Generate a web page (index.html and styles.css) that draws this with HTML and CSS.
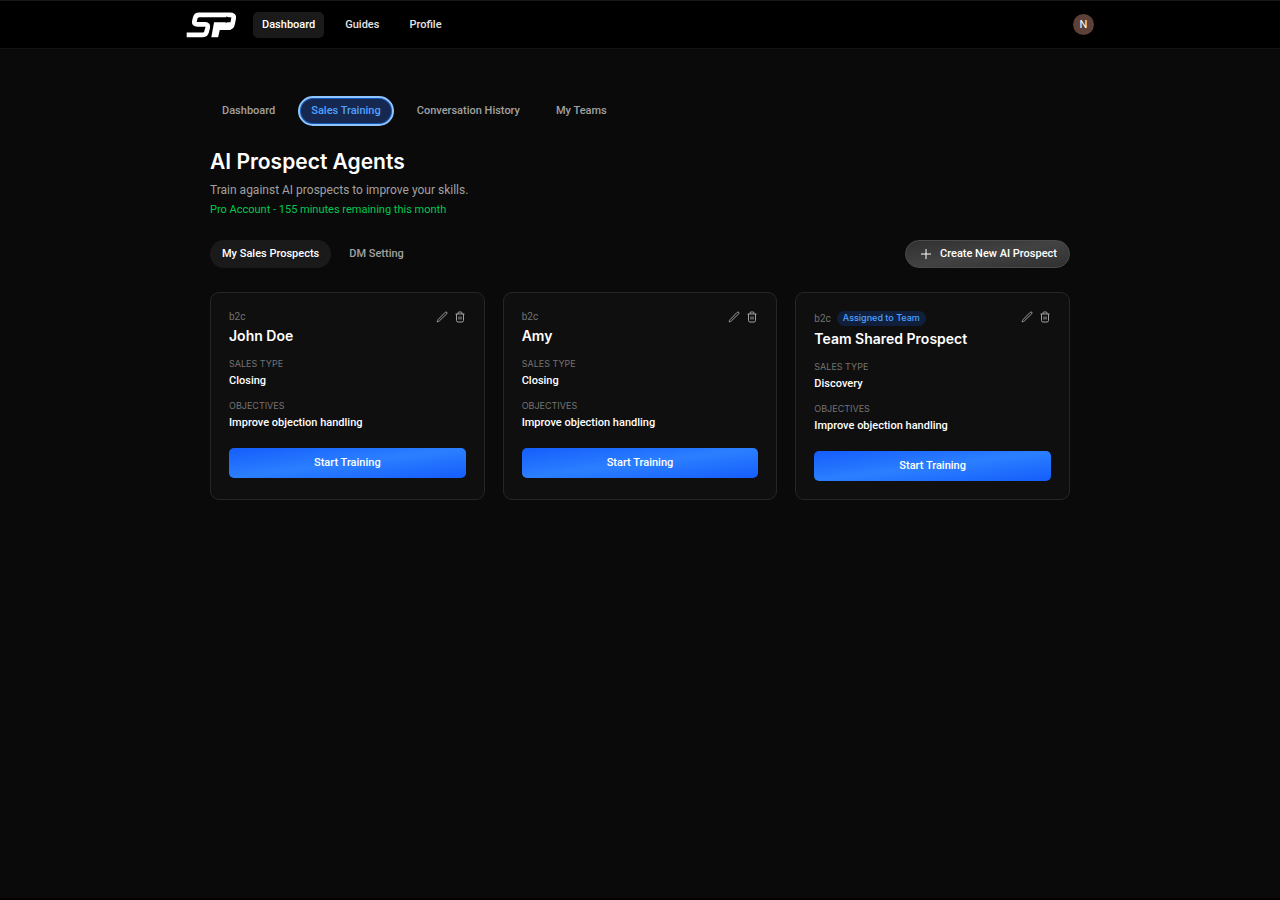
FILE: index.html
```html
<!DOCTYPE html>
<html lang="en">

<head>
  <meta charset="UTF-8">
  <meta name="viewport" content="width=device-width, initial-scale=1.0">
  <title>AI Prospect Agents</title>
  <link rel="stylesheet" href="styles.css">
</head>

<body>
  <!-- shared icons -->
  <svg class="sprite" aria-hidden="true">
    <symbol id="icon-edit" viewBox="0 0 24 24">
      <path d="M17.5 3.5l1-1a1.9 1.9 0 0 1 3 3L6.8 19.8a4.5 4.5 0 0 1-1.9 1.1L2.3 21.8l.8-2.7a4.5 4.5 0 0 1 1.1-1.9L17.5 3.5z" />
    </symbol>
    <symbol id="icon-trash" viewBox="0 0 24 24">
      <path d="M3 6h18M5 6v13a3 3 0 0 0 3 3h8a3 3 0 0 0 3-3V6M8 6V4a2 2 0 0 1 2-2h4a2 2 0 0 1 2 2v2M10 11v6M14 11v6" />
    </symbol>
  </svg>

  <header class="header">
    <div class="header-inner">
      <a class="logo" href="#" aria-label="SP">
        <svg viewBox="20 22 148 76">
          <path class="logo-line" d="M22 89H70Q79 89 81 80L84 68Q86 58 77 58H54Q43 58 45 49L47 40Q49 30 59 30H150Q163 30 161 40L158 56Q156 68 144 68" />
          <path class="logo-stem" d="M103 52H158L152 75H120L115 96H95Z" />
          <path class="logo-arrow" d="M140 34L153 44L137 55L139 48H56V41H139Z" />
        </svg>
      </a>
      <nav class="nav">
        <a class="nav-link active" href="#">Dashboard</a>
        <a class="nav-link" href="#">Guides</a>
        <a class="nav-link" href="#">Profile</a>
      </nav>
      <button class="avatar" type="button">N</button>
    </div>
  </header>

  <main class="main">
    <nav class="tabs">
      <a class="tab" href="#">Dashboard</a>
      <a class="tab current" href="#">Sales Training</a>
      <a class="tab" href="#">Conversation History</a>
      <a class="tab" href="#">My Teams</a>
    </nav>

    <h1 class="title">AI Prospect Agents</h1>
    <p class="subtitle">Train against AI prospects to improve your skills.</p>
    <p class="account">Pro Account - 155 minutes remaining this month</p>

    <div class="toolbar">
      <div class="filters">
        <button class="filter active" type="button">My Sales Prospects</button>
        <button class="filter" type="button">DM Setting</button>
      </div>
      <button class="create" type="button">
        <svg class="icon-plus" viewBox="0 0 12 12"><path d="M6 1v10M1 6h10" /></svg>
        Create New AI Prospect
      </button>
    </div>

    <div class="cards">
      <article class="card">
        <div class="card-head">
          <div>
            <div class="meta">b2c</div>
            <h2 class="name">John Doe</h2>
          </div>
          <div class="actions">
            <button type="button" aria-label="Edit"><svg><use href="#icon-edit" /></svg></button>
            <button type="button" aria-label="Delete"><svg><use href="#icon-trash" /></svg></button>
          </div>
        </div>
        <dl class="details">
          <dt>SALES TYPE</dt>
          <dd>Closing</dd>
          <dt>OBJECTIVES</dt>
          <dd>Improve objection handling</dd>
        </dl>
        <button class="start" type="button">Start Training</button>
      </article>

      <article class="card">
        <div class="card-head">
          <div>
            <div class="meta">b2c</div>
            <h2 class="name">Amy</h2>
          </div>
          <div class="actions">
            <button type="button" aria-label="Edit"><svg><use href="#icon-edit" /></svg></button>
            <button type="button" aria-label="Delete"><svg><use href="#icon-trash" /></svg></button>
          </div>
        </div>
        <dl class="details">
          <dt>SALES TYPE</dt>
          <dd>Closing</dd>
          <dt>OBJECTIVES</dt>
          <dd>Improve objection handling</dd>
        </dl>
        <button class="start" type="button">Start Training</button>
      </article>

      <article class="card">
        <div class="card-head">
          <div>
            <div class="meta">b2c <span class="badge">Assigned to Team</span></div>
            <h2 class="name">Team Shared Prospect</h2>
          </div>
          <div class="actions">
            <button type="button" aria-label="Edit"><svg><use href="#icon-edit" /></svg></button>
            <button type="button" aria-label="Delete"><svg><use href="#icon-trash" /></svg></button>
          </div>
        </div>
        <dl class="details">
          <dt>SALES TYPE</dt>
          <dd>Discovery</dd>
          <dt>OBJECTIVES</dt>
          <dd>Improve objection handling</dd>
        </dl>
        <button class="start" type="button">Start Training</button>
      </article>
    </div>
  </main>
</body>

</html>
```
FILE: styles.css
```css
* {
  box-sizing: border-box;
  margin: 0;
  padding: 0;
}

body {
  min-height: 100vh;
  background-color: #0a0a0a;
  border-bottom: 2px solid #000;
  color: #fff;
  font: 500 11px/16px Roboto, "Liberation Sans", sans-serif;
}

a {
  color: inherit;
  text-decoration: none;
}

button {
  border: none;
  background: none;
  color: inherit;
  font: inherit;
  cursor: pointer;
}

.sprite {
  display: none;
}

/* header */
.header {
  background-color: #000;
  border-top: 1px solid #171717;
  border-bottom: 1px solid #121212;
}

.header-inner {
  display: flex;
  align-items: center;
  max-width: 908px;
  height: 47px;
  margin: 0 auto;
}

.logo svg {
  display: block;
  width: 50px;
  height: 26px;
}

.logo-line {
  fill: none;
  stroke: #fff;
  stroke-width: 14;
}

.logo-stem {
  fill: #fff;
}

.logo-arrow {
  fill: #000;
}

.nav {
  display: flex;
  gap: 12px;
  margin-left: 17px;
}

.nav-link {
  padding: 5px 9px;
  border-radius: 5px;
  color: #e5e5e5;
}

.nav-link.active {
  background-color: #1a1a1a;
  color: #fff;
}

.avatar {
  width: 21px;
  height: 21px;
  margin-left: auto;
  border-radius: 50%;
  background-color: #5d4037;
  font-weight: 400;
}

/* page */
.main {
  max-width: 908px;
  margin: 0 auto;
  padding: 47px 24px;
}

.tabs {
  display: flex;
  gap: 12px;
}

.tab {
  padding: 7px 12px;
  border-radius: 15px;
  color: #a1a1a1;
}

.tab.current {
  margin: 0 -1px;
  padding: 5px 11px;
  border: 2px solid #8ec5ff;
  background-color: #162850;
  box-shadow: inset 0 0 0 1px #1559c0;
  color: #51a2ff;
}

.title {
  margin-top: 22px;
  font-family: Inter, "Liberation Sans", sans-serif;
  font-size: 21px;
  font-weight: 600;
  line-height: 28px;
}

.subtitle {
  margin-top: 5px;
  color: #a1a1a1;
  font-size: 12px;
  font-weight: 400;
  line-height: 18px;
}

.account {
  margin-top: 3px;
  color: #00c950;
  font-weight: 400;
}

.toolbar {
  display: flex;
  align-items: center;
  justify-content: space-between;
  margin: 22px 0 24px;
}

.filters {
  display: flex;
  gap: 6px;
}

.filter {
  padding: 6px 12px;
  border-radius: 14px;
  color: #a1a1a1;
}

.filter.active {
  background-color: #1a1a1a;
  color: #fff;
}

.create {
  display: flex;
  align-items: center;
  gap: 8px;
  padding: 5px 12px 5px 14px;
  border: 1px solid #4a4a4a;
  border-radius: 15px;
  background: linear-gradient(to bottom right, #303030, #424242, #303030);
}

.icon-plus {
  width: 12px;
  height: 12px;
  fill: none;
  stroke: currentColor;
  stroke-width: 1;
}

/* prospect cards */
.cards {
  display: grid;
  grid-template-columns: repeat(3, 1fr);
  gap: 18px;
}

.card {
  padding: 18px;
  border: 1px solid #262626;
  border-radius: 9px;
  background-color: #0f0f0f;
}

.card-head {
  display: flex;
  align-items: flex-start;
  justify-content: space-between;
}

.meta {
  display: flex;
  align-items: center;
  gap: 6px;
  color: #737373;
  font-size: 10px;
  font-weight: 400;
  line-height: 12px;
}

.badge {
  padding: 1px 6px 2px;
  border-radius: 8px;
  background-color: #10203c;
  color: #51a2ff;
  font-family: Inter, "Liberation Sans", sans-serif;
  font-size: 9px;
  font-weight: 500;
}

.name {
  margin-top: 2px;
  font-family: Inter, "Liberation Sans", sans-serif;
  font-size: 14px;
  font-weight: 600;
  line-height: 22px;
}

.actions {
  display: flex;
  gap: 6px;
}

.actions button {
  width: 12px;
  height: 12px;
  color: #a1a1a1;
}

.actions svg {
  display: block;
  width: 12px;
  height: 12px;
  fill: none;
  stroke: currentColor;
  stroke-width: 2;
}

.details dt {
  margin-top: 11px;
  color: #737373;
  font-family: Inter, "Liberation Sans", sans-serif;
  font-size: 9px;
  font-weight: 400;
  line-height: 12px;
}

.details dd {
  margin-top: 3px;
}

.start {
  display: block;
  width: 100%;
  height: 30px;
  margin-top: 17px;
  border-radius: 5px;
  background: linear-gradient(to bottom right, #155dfc, #2b7fff, #155dfc);
}
```
